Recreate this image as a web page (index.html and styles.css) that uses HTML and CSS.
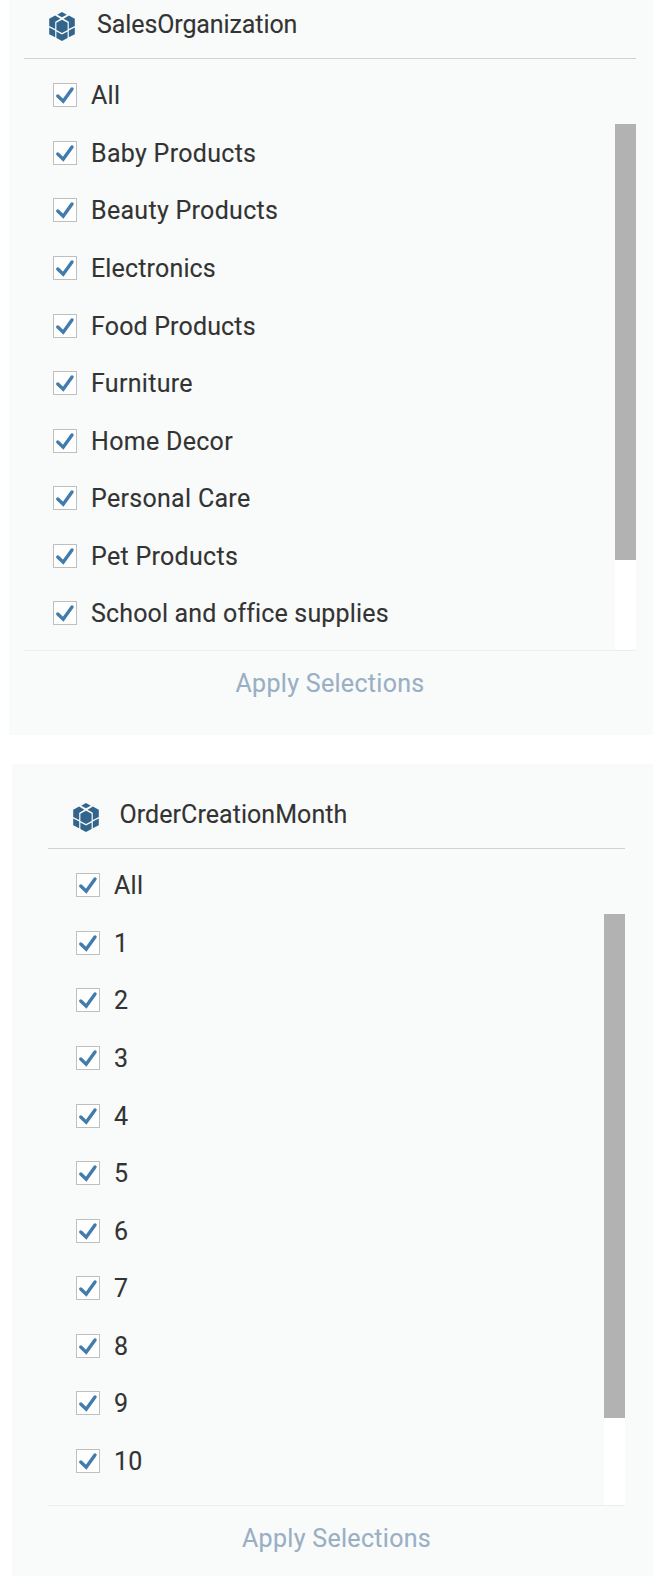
FILE: index.html
```
<!DOCTYPE html>
<html lang="en">
<head>
<meta charset="utf-8">
<title>Filters</title>
<link rel="stylesheet" href="styles.css">
</head>
<body>
<svg class="defs" aria-hidden="true">
  <symbol id="cube" viewBox="0 0 26 29">
    <path d="M13 0 17.8 2.7 13 5.3 8.2 2.7Z"/>
    <path d="M.2 6.7 6.1 3.6 11.4 6.7 6.2 9.7V17L.2 14Z"/>
    <path d="M25.8 6.7 19.9 3.6 14.6 6.7 19.8 9.7V17L25.8 14Z"/>
    <path d="M13 7.7 18.6 10.7V17.9L13 20.9 7.4 17.9V10.7Z"/>
    <path d="M.2 15.6 6.2 18.6V25.2L.2 22.2Z"/>
    <path d="M25.8 15.6 19.8 18.6V25.2L25.8 22.2Z"/>
    <path d="M7.4 19.4 13 22.4 18.6 19.4V25.9L13 29 7.4 25.9Z"/>
  </symbol>
  <symbol id="check" viewBox="0 0 22 22">
    <path d="M3.8 12 9.2 17.2 18 5" fill="none" stroke="#427cac" stroke-width="3.4" stroke-linecap="round"/>
  </symbol>
</svg>
<main class="page">
  <section class="panel sales">
    <header class="head"><svg class="cube"><use href="#cube"/></svg><h2 class="title">SalesOrganization</h2></header>
    <div class="body">
      <ul class="list">
        <li class="item"><span class="box"><svg><use href="#check"/></svg></span><span class="label">All</span></li>
        <li class="item"><span class="box"><svg><use href="#check"/></svg></span><span class="label">Baby Products</span></li>
        <li class="item"><span class="box"><svg><use href="#check"/></svg></span><span class="label">Beauty Products</span></li>
        <li class="item"><span class="box"><svg><use href="#check"/></svg></span><span class="label tight">Electronics</span></li>
        <li class="item"><span class="box"><svg><use href="#check"/></svg></span><span class="label tight">Food Products</span></li>
        <li class="item"><span class="box"><svg><use href="#check"/></svg></span><span class="label">Furniture</span></li>
        <li class="item"><span class="box"><svg><use href="#check"/></svg></span><span class="label">Home Decor</span></li>
        <li class="item"><span class="box"><svg><use href="#check"/></svg></span><span class="label">Personal Care</span></li>
        <li class="item"><span class="box"><svg><use href="#check"/></svg></span><span class="label">Pet Products</span></li>
        <li class="item"><span class="box"><svg><use href="#check"/></svg></span><span class="label tight">School and office supplies</span></li>
      </ul>
      <div class="track"><div class="thumb"></div></div>
    </div>
    <footer class="foot"><span class="apply">Apply Selections</span></footer>
  </section>
  <section class="panel month">
    <header class="head"><svg class="cube"><use href="#cube"/></svg><h2 class="title">OrderCreationMonth</h2></header>
    <div class="body">
      <ul class="list">
        <li class="item"><span class="box"><svg><use href="#check"/></svg></span><span class="label">All</span></li>
        <li class="item"><span class="box"><svg><use href="#check"/></svg></span><span class="label">1</span></li>
        <li class="item"><span class="box"><svg><use href="#check"/></svg></span><span class="label">2</span></li>
        <li class="item"><span class="box"><svg><use href="#check"/></svg></span><span class="label">3</span></li>
        <li class="item"><span class="box"><svg><use href="#check"/></svg></span><span class="label">4</span></li>
        <li class="item"><span class="box"><svg><use href="#check"/></svg></span><span class="label">5</span></li>
        <li class="item"><span class="box"><svg><use href="#check"/></svg></span><span class="label">6</span></li>
        <li class="item"><span class="box"><svg><use href="#check"/></svg></span><span class="label">7</span></li>
        <li class="item"><span class="box"><svg><use href="#check"/></svg></span><span class="label">8</span></li>
        <li class="item"><span class="box"><svg><use href="#check"/></svg></span><span class="label">9</span></li>
        <li class="item"><span class="box"><svg><use href="#check"/></svg></span><span class="label">10</span></li>
      </ul>
      <div class="track"><div class="thumb"></div></div>
    </div>
    <footer class="foot"><span class="apply">Apply Selections</span></footer>
  </section>
</main>
</body>
</html>
```
FILE: styles.css
```
* { box-sizing: border-box; }
body {
  margin: 0;
  background: #fff;
  color: #333;
  font: 25px/30px Roboto, "Liberation Sans", sans-serif;
  -webkit-text-stroke: .12px currentColor;
}
.defs { display: none; }
.page {
  display: flex;
  flex-direction: column;
  gap: 29px;
  height: 1576px;
  overflow: hidden;
}
.panel { background: #f9fbfa; }
.sales { height: 735px; margin: 0 15px 0 9px; padding: 0 17px 0 15px; }
.month { height: 812px; margin: 0 15px 0 12px; padding: 26px 28px 0 36px; }
.head {
  display: flex;
  height: 59px;
  padding-left: 25px;
  border-bottom: 1px solid #d0d2d1;
}
.cube { width: 26px; height: 29px; margin-top: 12px; fill: #33658c; }
.title { margin: 10px 0 0 22px; font-size: 25px; font-weight: 400; letter-spacing: -.1px; }
.month .head { padding-left: 24.5px; }
.month .cube { margin-top: 13px; }
.month .title { margin-left: 21px; letter-spacing: .06px; }
.body { display: flex; justify-content: space-between; height: 591px; }
.month .body { height: 656px; }
.list { list-style: none; margin: 0; padding: 7.5px 0 0 29px; }
.month .list { padding-left: 28px; }
.item { display: flex; align-items: center; height: 57.57px; }
.box { width: 24px; height: 24px; border: 1px solid #bfbfbf; background: #fff; }
.box svg { display: block; width: 22px; height: 22px; }
.label { margin-left: 14px; padding-top: 2px; letter-spacing: .3px; }
.tight { letter-spacing: .16px; }
.track { width: 21px; margin-top: 65px; background: #fff; }
.thumb { height: 436px; background: #b2b2b2; }
.month .thumb { height: 504px; }
.foot {
  padding-top: 18px;
  border-top: 1px solid #eceeed;
  text-align: center;
  color: #9aafc4;
  letter-spacing: .3px;
}
```
